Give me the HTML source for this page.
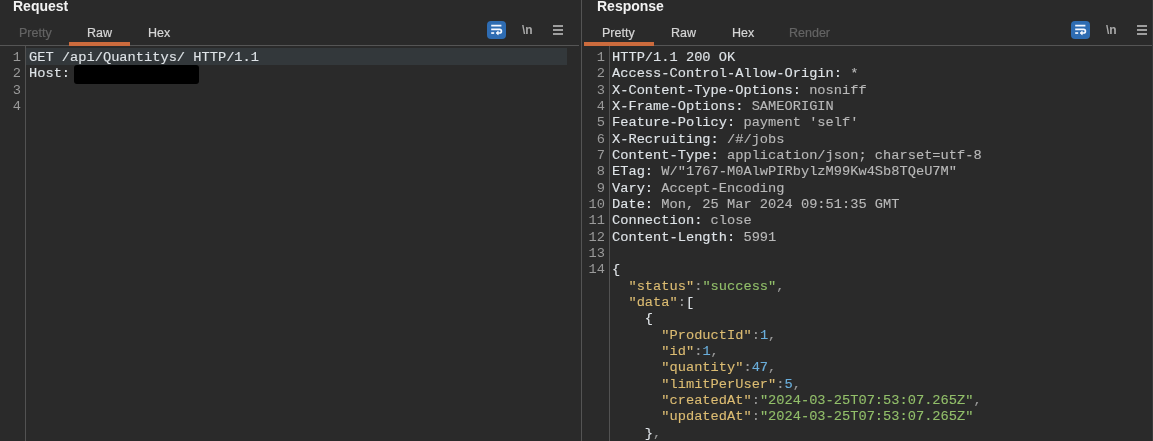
<!DOCTYPE html>
<html><head><meta charset="utf-8">
<style>
html,body{margin:0;padding:0;}
body{width:1153px;height:441px;overflow:hidden;background:#2a2a2a;position:relative;font-family:"Liberation Sans",sans-serif;}
.abs{position:absolute;}
body>*{will-change:transform;}
.title{position:absolute;top:-2px;font-weight:bold;font-size:14px;color:#f2f2f2;line-height:16px;}
.tab{position:absolute;top:25px;font-size:12.5px;-webkit-text-stroke:0.2px currentColor;line-height:16px;color:#d6d6d6;white-space:nowrap;}
.tab.dim{color:#646464;}
.bar{position:absolute;top:42px;height:4px;background:#cc6b3d;z-index:2;}
.hline{position:absolute;top:45px;height:1px;background:#555555;}
.vline{position:absolute;background:#525252;width:1px;}
.code{position:absolute;will-change:transform;-webkit-text-stroke:0.12px currentColor;font-family:"Liberation Mono",monospace;font-size:13.69px;line-height:16.33px;white-space:pre;color:#dfe4e8;}
.ln{position:absolute;will-change:transform;font-family:"Liberation Mono",monospace;font-size:13.69px;line-height:16.33px;white-space:pre;color:#9a9a9a;text-align:right;}
.v{color:#b9b9b9;}
.k{color:#dcbc72;}
.s{color:#92bf6a;}
.n{color:#6aaedb;}
.p{color:#9a9a9a;}
.wrapicon{position:absolute;top:21px;width:19px;height:18px;border-radius:4px;background:#2e6cb2;}
.nl{position:absolute;top:23px;font-size:12px;line-height:14px;color:#a9a9a9;font-weight:bold;}
.ham{position:absolute;width:9px;}
.ham i{position:absolute;left:0;width:9.5px;height:2px;background:#9e9e9e;}
</style></head><body>

<!-- Request panel -->
<div class="title" style="left:13px;">Request</div>
<div class="tab dim" style="left:19px;">Pretty</div>
<div class="tab" style="left:87px;">Raw</div>
<div class="tab" style="left:148px;">Hex</div>
<div class="bar" style="left:69px;width:61px;"></div>
<div class="hline" style="left:0;width:579px;"></div>

<div class="wrapicon" style="left:487px;">
<svg width="19" height="18" viewBox="0 0 19 18"><path d="M4.2 4.6h10.2M4.2 8.4h8.4a1.8 1.8 0 0 1 0 3.6H9.5" stroke="#f4f8ff" stroke-width="1.7" fill="none"/><path d="M11.2 10.2l-2 1.8 2 1.8z" fill="#f4f8ff" stroke="#f4f8ff" stroke-width="0.8"/><rect x="4.2" y="11.2" width="3" height="1.7" fill="#f4f8ff"/></svg>
</div>
<div class="nl" style="left:522px;">\n</div>
<div class="ham" style="left:553px;top:25px;"><i style="top:0"></i><i style="top:4px"></i><i style="top:8px"></i></div>

<div class="vline" style="left:25px;top:46px;height:395px;"></div>
<div class="abs" style="left:26px;top:48px;width:541px;height:17px;background:#33383b;"></div>
<div class="ln" style="left:0;width:21px;top:50px;">1
2
3
4</div>
<div class="code" style="left:28.5px;top:50px;">GET /api/Quantitys/ HTTP/1.1
Host: </div>
<div class="abs" style="left:74px;top:65px;width:125px;height:19px;background:#000;border-radius:3px;"></div>

<!-- divider -->
<div class="vline" style="left:581px;top:0;height:441px;background:#545454;"></div>

<!-- Response panel -->
<div class="title" style="left:597px;">Response</div>
<div class="tab" style="left:602px;">Pretty</div>
<div class="tab" style="left:671px;">Raw</div>
<div class="tab" style="left:732px;">Hex</div>
<div class="tab dim" style="left:789px;">Render</div>
<div class="bar" style="left:584px;width:70px;"></div>
<div class="hline" style="left:654px;width:498px;"></div>

<div class="wrapicon" style="left:1071px;">
<svg width="19" height="18" viewBox="0 0 19 18"><path d="M4.2 4.6h10.2M4.2 8.4h8.4a1.8 1.8 0 0 1 0 3.6H9.5" stroke="#f4f8ff" stroke-width="1.7" fill="none"/><path d="M11.2 10.2l-2 1.8 2 1.8z" fill="#f4f8ff" stroke="#f4f8ff" stroke-width="0.8"/><rect x="4.2" y="11.2" width="3" height="1.7" fill="#f4f8ff"/></svg>
</div>
<div class="nl" style="left:1106px;">\n</div>
<div class="ham" style="left:1137px;top:25px;"><i style="top:0"></i><i style="top:4px"></i><i style="top:8px"></i></div>

<div class="vline" style="left:609px;top:46px;height:395px;"></div>
<div class="vline" style="left:1152px;top:0;height:441px;background:#3a3a3a;"></div>
<div class="ln" style="left:582px;width:23px;top:50px;">1
2
3
4
5
6
7
8
9
10
11
12
13
14</div>
<div class="code" style="left:612px;top:50px;">HTTP/1.1 200 OK
Access-Control-Allow-Origin:<span class="v"> *</span>
X-Content-Type-Options:<span class="v"> nosniff</span>
X-Frame-Options:<span class="v"> SAMEORIGIN</span>
Feature-Policy:<span class="v"> payment 'self'</span>
X-Recruiting:<span class="v"> /#/jobs</span>
Content-Type:<span class="v"> application/json; charset=utf-8</span>
ETag:<span class="v"> W/"1767-M0AlwPIRbylzM99Kw4Sb8TQeU7M"</span>
Vary:<span class="v"> Accept-Encoding</span>
Date:<span class="v"> Mon, 25 Mar 2024 09:51:35 GMT</span>
Connection:<span class="v"> close</span>
Content-Length:<span class="v"> 5991</span>

{
  <span class="k">"status"</span><span class="p">:</span><span class="s">"success"</span><span class="p">,</span>
  <span class="k">"data"</span><span class="p">:</span>[
    {
      <span class="k">"ProductId"</span><span class="p">:</span><span class="n">1</span><span class="p">,</span>
      <span class="k">"id"</span><span class="p">:</span><span class="n">1</span><span class="p">,</span>
      <span class="k">"quantity"</span><span class="p">:</span><span class="n">47</span><span class="p">,</span>
      <span class="k">"limitPerUser"</span><span class="p">:</span><span class="n">5</span><span class="p">,</span>
      <span class="k">"createdAt"</span><span class="p">:</span><span class="s">"2024-03-25T07:53:07.265Z"</span><span class="p">,</span>
      <span class="k">"updatedAt"</span><span class="p">:</span><span class="s">"2024-03-25T07:53:07.265Z"</span>
    }<span class="p">,</span></div>

</body></html>
